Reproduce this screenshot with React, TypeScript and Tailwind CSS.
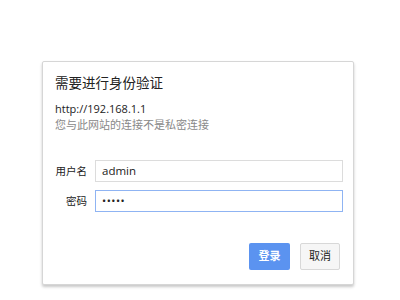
import React from "react";

export default function App() {
  const font = { fontFamily: '"Open Sans", "Noto Sans CJK SC", sans-serif' };
  return (
    <div className="w-[400px] h-[300px] bg-white pt-[61px] pl-[42px]" style={font}>
      <div className="w-[312px] h-[224px] border border-[#d6d6d6] rounded-[2px] bg-white shadow-[0_2px_3px_rgba(0,0,0,0.22)] pl-[12px] pr-[10px] flex flex-col">
        <div className="mt-[11px] text-[13.5px] leading-[20px] text-[#222]">需要进行身份验证</div>
        <div className="mt-[9px] text-[11px] leading-[14px] text-[#222]">http://192.168.1.1</div>
        <div className="mt-[2px] text-[11px] leading-[14px] text-[#888]">您与此网站的连接不是私密连接</div>
        <div className="mt-[28px] flex items-center">
          <div className="w-[32px] whitespace-nowrap text-right text-[10.5px] leading-[22px] text-[#222]">用户名</div>
          <div className="ml-[8px] w-[248px] h-[22px] border border-[#dcdcdc] bg-white flex items-center pl-[6px] text-[11.5px] text-[#222]">admin</div>
        </div>
        <div className="mt-[8px] flex items-center">
          <div className="w-[32px] whitespace-nowrap text-right text-[10.5px] leading-[22px] text-[#222]">密码</div>
          <div className="ml-[8px] w-[248px] h-[22px] border border-[#8fb4f3] bg-white flex items-center pl-[6px] text-[11px] text-[#222] tracking-[0.5px]">
            •••••
          </div>
        </div>
        <div className="mt-[31px] flex justify-end gap-[10px] mr-[3px]">
          <div className="w-[41px] h-[27px] rounded-[2px] bg-[#5b93f0] text-white text-[11px] font-semibold flex items-center justify-center">登录</div>
          <div className="w-[40px] h-[27px] rounded-[2px] bg-[#f6f6f6] border border-[#d8d8d8] text-[#222] text-[11px] flex items-center justify-center">取消</div>
        </div>
      </div>
    </div>
  );
}
